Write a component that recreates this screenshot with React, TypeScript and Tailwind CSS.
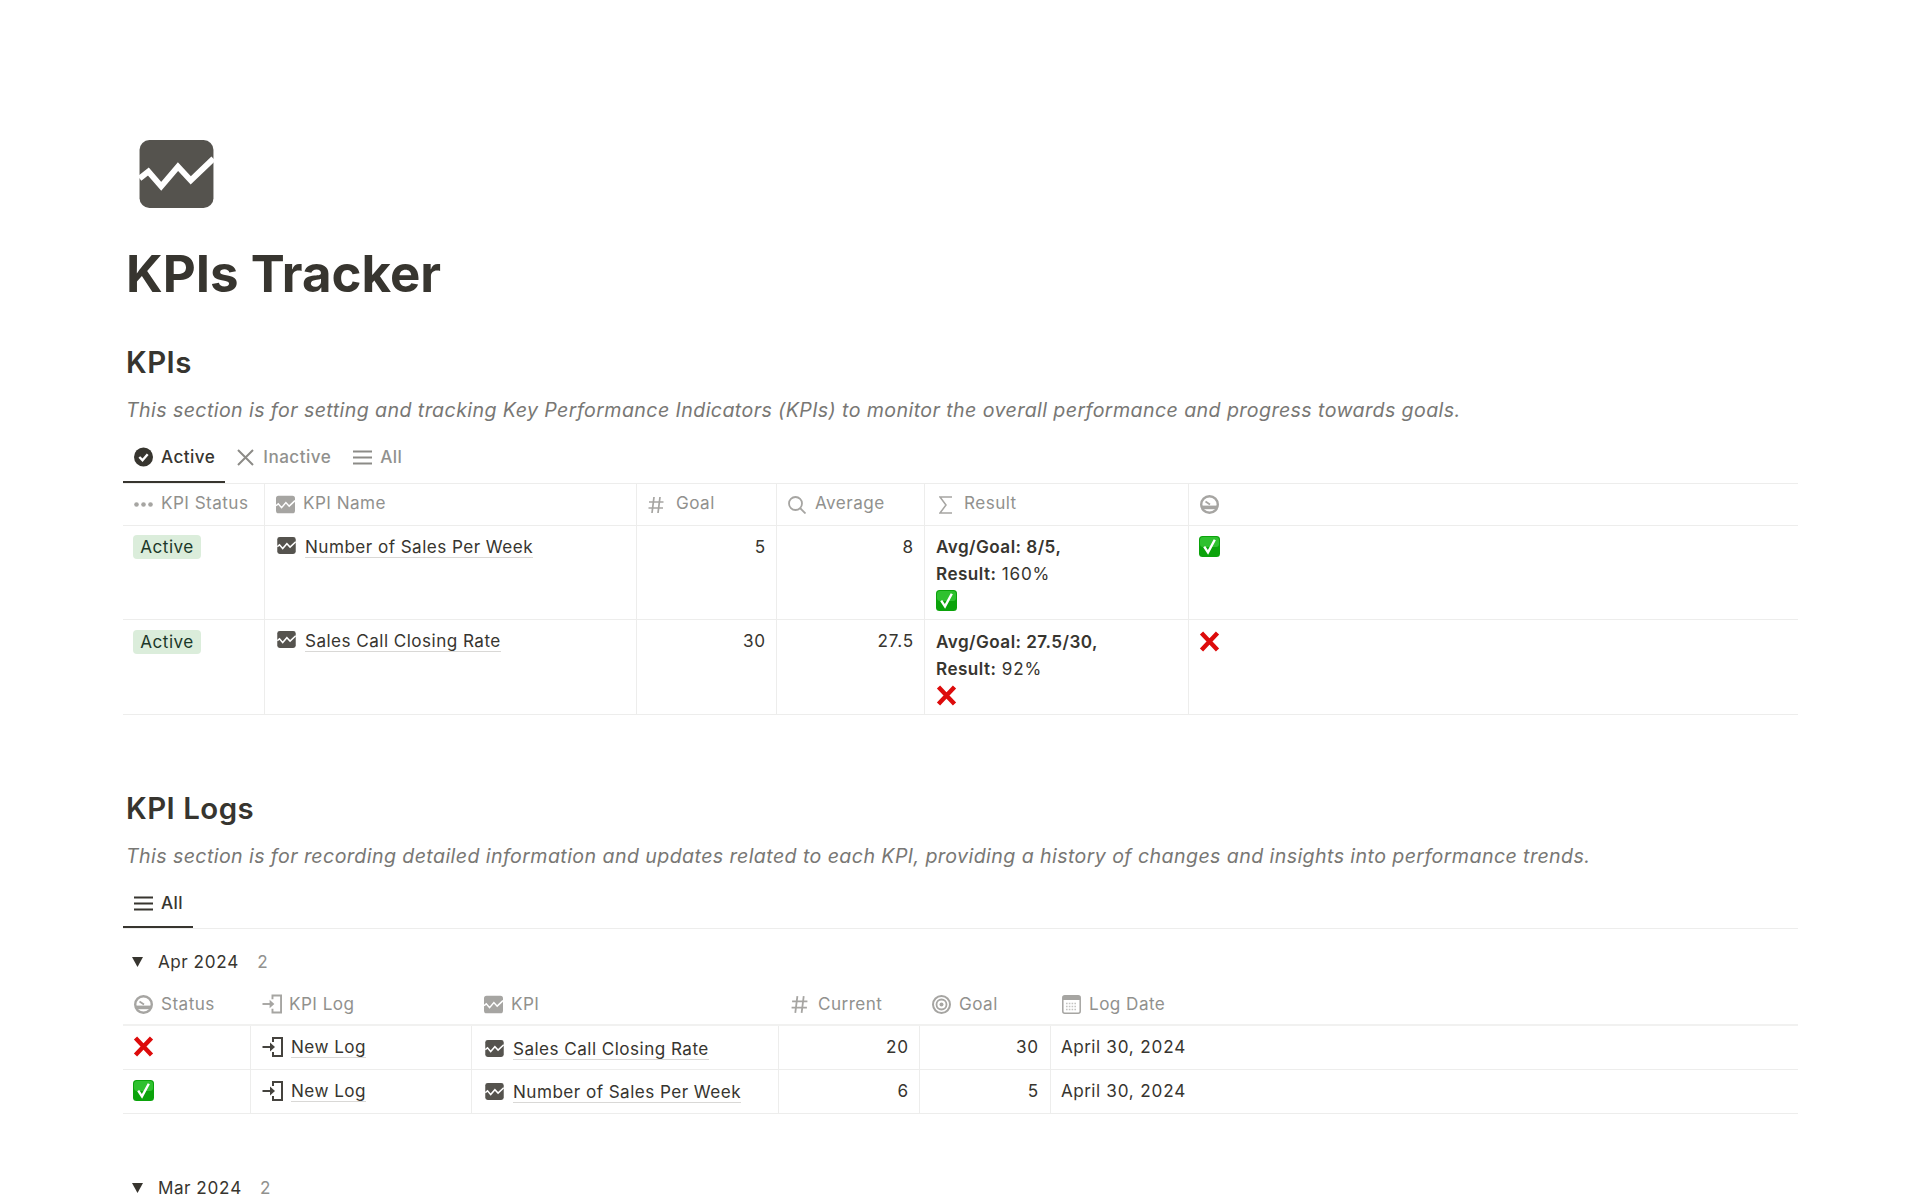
const FONT = "font-['Inter','Noto_Sans',sans-serif]";

function ChartIcon({ className, fill = "#55534e" }: { className: string; fill?: string }) {
  return (
    <svg viewBox="0 0 75 69" className={className}>
      <rect width="75" height="69" rx="10" fill={fill} />
      <path d="M0 39 L9 32 L22 47 L39 27 L52 41 L75 19" fill="none" stroke="#fff" strokeWidth="6" />
    </svg>
  );
}

function CheckEmoji({ className = "h-[21px] w-[21px]" }: { className?: string }) {
  return (
    <svg viewBox="0 0 21 21" className={className}>
      <rect width="21" height="21" rx="3.5" fill="#0ba30b" />
      <rect x="1" y="1" width="19" height="10" rx="3" fill="#2fc12f" />
      <path d="M5.2 10.6 L9 16.4 L15.8 3.8" fill="none" stroke="#fff" strokeWidth="2.4" />
    </svg>
  );
}

function CrossEmoji({ className = "h-[21px] w-[21px]" }: { className?: string }) {
  return (
    <svg viewBox="0 0 21 21" className={className}>
      <path d="M2.5 2 L18.5 19 M18.5 2 L2.5 19" fill="none" stroke="#dd0b0b" strokeWidth="4.4" />
    </svg>
  );
}

function StatusIcon({ className = "h-[19px] w-[19px]" }: { className?: string }) {
  return (
    <svg viewBox="0 0 19 19" className={className} fill="none">
      <circle cx="9.5" cy="9.5" r="8.3" stroke="#a6a5a2" strokeWidth="2.4" />
      <path d="M10 9.5 L5.5 6.5" stroke="#a6a5a2" strokeWidth="1.8" />
      <rect x="2" y="10.6" width="15" height="3.6" fill="#a6a5a2" />
    </svg>
  );
}

function LogIcon({ color, className }: { color: string; className: string }) {
  return (
    <svg viewBox="0 0 21 20" className={className} fill="none" stroke={color} strokeWidth="2">
      <path d="M11 5 V1 H20 V19 H11 V15" />
      <path d="M0.5 10 H11" />
      <path d="M8 5.5 L13 10 L8 14.5 Z" fill={color} stroke="none" />
    </svg>
  );
}

function HashIcon({ className = "h-[18px] w-[16px]" }: { className?: string }) {
  return (
    <svg viewBox="0 0 16 18" className={className} fill="none" stroke="#a6a5a2" strokeWidth="1.7">
      <path d="M6 1 L4 17 M12 1 L10 17 M1 6 H15.5 M0.5 12 H15" />
    </svg>
  );
}

function MenuIcon({ color, className }: { color: string; className: string }) {
  return (
    <svg viewBox="0 0 19 15" className={className} fill="none" stroke={color} strokeWidth="2">
      <path d="M0 1.5 H19 M0 7.5 H19 M0 13.5 H19" />
    </svg>
  );
}

function NameLink({ children }: { children: string }) {
  return <span className="border-b border-[#d9d8d6] leading-[21px]">{children}</span>;
}

function Digits({ children }: { children: string }) {
  return <span className="tracking-[0.85px]">{children}</span>;
}

function ActiveTag() {
  return (
    <span className="flex h-[24px] w-[68px] items-center justify-center rounded-[4px] bg-[#dbeddb] text-[#1c3829]">
      Active
    </span>
  );
}

const kpiHeaders = [
  { icon: <svg viewBox="0 0 19 5" className="mt-[3px] h-[5px] w-[19px]" fill="#a6a5a2"><circle cx="2.5" cy="2.5" r="2.3" /><circle cx="9.5" cy="2.5" r="2.3" /><circle cx="16.5" cy="2.5" r="2.3" /></svg>, label: "KPI Status", gap: "gap-[8px]" },
  { icon: <ChartIcon className="mt-[3px] h-[19px] w-[19px]" fill="#a6a5a2" />, label: "KPI Name", gap: "gap-[8px]" },
  { icon: <HashIcon className="mt-[3px] h-[18px] w-[16px]" />, label: "Goal", gap: "gap-[12px]" },
  { icon: <svg viewBox="0 0 18 18" className="mt-[3px] h-[18px] w-[18px]" fill="none" stroke="#a6a5a2" strokeWidth="1.8"><circle cx="7.5" cy="7.5" r="6.5" /><path d="M12 12 L17.5 17.5" /></svg>, label: "Average", gap: "gap-[9px]" },
  { icon: <svg viewBox="0 0 14 18" className="ml-[3px] mt-[3px] h-[18px] w-[14px]" fill="none" stroke="#a6a5a2" strokeWidth="1.5"><path d="M13 1 H1 L7 9 L1 17 H13" /></svg>, label: "Result", gap: "gap-[11px]" },
  { icon: <StatusIcon className="mt-[3px] h-[19px] w-[19px]" />, label: "", gap: "" },
];

const kpiRows = [
  { name: "Number of Sales Per Week", goal: "5", avg: "8", ratio: "8/5", result: "160%", ok: true },
  { name: "Sales Call Closing Rate", goal: "30", avg: "27.5", ratio: "27.5/30", result: "92%", ok: false },
];

const logHeaders = [
  { icon: <StatusIcon />, label: "Status", gap: "gap-[8px]", pad: "pl-[11px]" },
  { icon: <LogIcon color="#a6a5a2" className="h-[20px] w-[20px]" />, label: "KPI Log", gap: "gap-[7px]", pad: "pl-[11px]" },
  { icon: <ChartIcon className="h-[19px] w-[19px]" fill="#a6a5a2" />, label: "KPI", gap: "gap-[8px]", pad: "pl-[12px]" },
  { icon: <HashIcon className="h-[19px] w-[17px]" />, label: "Current", gap: "gap-[10px]", pad: "pl-[12px]" },
  { icon: <svg viewBox="0 0 19 19" className="h-[19px] w-[19px]" fill="none" stroke="#a6a5a2"><circle cx="9.5" cy="9.5" r="8.5" strokeWidth="2" /><circle cx="9.5" cy="9.5" r="5" strokeWidth="1.8" /><circle cx="9.5" cy="9.5" r="2" fill="#a6a5a2" stroke="none" /></svg>, label: "Goal", gap: "gap-[8px]", pad: "pl-[12px]" },
  { icon: <svg viewBox="0 0 19 19" className="h-[19px] w-[19px]" fill="none"><rect x="0.8" y="0.8" width="17.4" height="17.4" rx="2" stroke="#a6a5a2" strokeWidth="1.5" /><rect x="1" y="1" width="17" height="4" fill="#a6a5a2" /><path d="M4 8.5 H15 M4 11.5 H15 M4 14.5 H15" stroke="#c4c3c1" strokeWidth="1.6" strokeDasharray="1.6 1.2" /></svg>, label: "Log Date", gap: "gap-[8px]", pad: "pl-[11px]" },
];

const logRows = [
  { ok: false, kpi: "Sales Call Closing Rate", current: "20", goal: "30" },
  { ok: true, kpi: "Number of Sales Per Week", current: "6", goal: "5" },
];

function GroupTitle({ month, year }: { month: string; year: string }) {
  return (
    <div className="flex h-[24px] items-center pl-[9px] text-[#37352f]">
      <svg viewBox="0 0 11 10" className="h-[10px] w-[11px]" fill="#37352f"><path d="M0 0 H11 L5.5 10 Z" /></svg>
      <span className="ml-[15px]">{month} <Digits>{year}</Digits></span>
      <span className="ml-[18px] text-[#91918e]">2</span>
    </div>
  );
}

export default function App() {
  return (
    <div className={`${FONT} h-[1199px] overflow-hidden bg-white pl-[123px] pr-[122px] text-[17.14px] tracking-[0.45px] text-[#37352f]`}>
      {/* Page head */}
      <div className="pl-[15px] pt-[140px]">
        <ChartIcon className="h-[68px] w-[77px]" />
      </div>
      <h1 className="mt-[36px] pl-[3px] text-[51px] font-bold leading-[60px] tracking-normal text-[#37352f]">KPIs Tracker</h1>

      {/* KPIs */}
      <h2 className="mt-[40px] pl-[3px] text-[29.4px] font-semibold leading-[38px] tracking-[0.5px]">KPIs</h2>
      <p className="mt-[14px] pl-[3px] text-[19.6px] italic leading-[28px] tracking-[0.41px] text-[#787774]">
        This section is for setting and tracking Key Performance Indicators (KPIs) to monitor the overall performance and progress towards goals.
      </p>

      <div className="mt-[13px] flex h-[47px] items-stretch border-b border-[#ededec] pl-[11px]">
        <div className="relative flex items-center gap-[8px] pb-[6px]">
          <svg viewBox="0 0 19 19" className="h-[20px] w-[19px]" fill="none">
            <circle cx="9.5" cy="9.5" r="9.5" fill="#37352f" />
            <path d="M5.3 9.5 L8.5 12.7 L13.7 6.8" stroke="#fff" strokeWidth="2.4" />
          </svg>
          <span className="font-medium">Active</span>
          <div className="absolute -left-[11px] -right-[10px] bottom-0 h-[2px] bg-[#37352f]" />
        </div>
        <div className="ml-[22px] flex items-center gap-[9px] pb-[6px] text-[#91918e]">
          <svg viewBox="0 0 17 17" className="h-[17px] w-[17px]" fill="none" stroke="#8c8b87" strokeWidth="2"><path d="M1 1 L16 16 M16 1 L1 16" /></svg>
          <span className="font-medium">Inactive</span>
        </div>
        <div className="ml-[22px] flex items-center gap-[8px] pb-[6px] text-[#91918e]">
          <MenuIcon color="#8c8b87" className="h-[15px] w-[19px]" />
          <span className="font-medium">All</span>
        </div>
      </div>

      <div className="grid grid-cols-[142px_372px_140px_148px_264px_1fr] border-b border-[#ededec]">
        {kpiHeaders.map((h, i) => (
          <div key={i} className={`flex h-[42px] items-center border-b border-[#ededec] pb-[3px] pl-[11px] text-[#91918e] ${h.gap} ${i < 5 ? "border-r" : ""}`}>
            {h.icon}
            {h.label && <span>{h.label}</span>}
          </div>
        ))}
        {kpiRows.map((r, i) => (
          <div key={r.name} className="contents">
            <div className={`h-[94px] border-r border-[#ededec] pl-[10px] ${i === 0 ? "border-b pt-[9px]" : "pt-[10px]"}`}>
              <ActiveTag />
            </div>
            <div className={`flex h-[94px] items-start gap-[9px] border-r border-[#ededec] pl-[12px] pt-[10px] ${i === 0 ? "border-b" : ""}`}>
              <ChartIcon className="mt-[1px] h-[17px] w-[19px]" />
              <NameLink>{r.name}</NameLink>
            </div>
            <div className={`h-[94px] border-r border-[#ededec] pr-[10px] pt-[10px] text-right leading-[21px] ${i === 0 ? "border-b" : ""}`}><Digits>{r.goal}</Digits></div>
            <div className={`h-[94px] border-r border-[#ededec] pr-[10px] pt-[10px] text-right leading-[21px] ${i === 0 ? "border-b" : ""}`}><Digits>{r.avg}</Digits></div>
            <div className={`h-[94px] border-r border-[#ededec] pl-[11px] leading-[27px] ${i === 0 ? "border-b pt-[7px]" : "pt-[8px]"}`}>
              <div className="font-semibold">Avg/Goal: {r.ratio},</div>
              <div><span className="font-semibold">Result:</span> <Digits>{r.result}</Digits></div>
              {r.ok ? <CheckEmoji className="mt-[3px] h-[21px] w-[21px]" /> : <CrossEmoji className="mt-[3px] h-[21px] w-[21px]" />}
            </div>
            <div className={`h-[94px] border-[#ededec] pl-[10px] ${i === 0 ? "border-b pt-[10px]" : "pt-[11px]"}`}>
              {r.ok ? <CheckEmoji /> : <CrossEmoji />}
            </div>
          </div>
        ))}
      </div>

      {/* KPI Logs */}
      <h2 className="mt-[75px] pl-[3px] text-[29.4px] font-semibold leading-[38px] tracking-[0.5px]">KPI Logs</h2>
      <p className="mt-[14px] pl-[3px] text-[19.6px] italic leading-[28px] tracking-[0.41px] text-[#787774]">
        This section is for recording detailed information and updates related to each KPI, providing a history of changes and insights into performance trends.
      </p>

      <div className="mt-[13px] flex h-[46px] items-stretch border-b border-[#ededec] pl-[11px]">
        <div className="relative flex items-center gap-[8px] pb-[5px]">
          <MenuIcon color="#37352f" className="h-[15px] w-[19px]" />
          <span className="font-medium">All</span>
          <div className="absolute -left-[11px] -right-[10px] bottom-0 h-[2px] bg-[#37352f]" />
        </div>
      </div>

      <div className="mt-[21px]">
        <GroupTitle month="Apr" year="2024" />
      </div>
      <div className="mt-[10px] grid grid-cols-[128px_221px_307px_141px_131px_1fr] border-b border-[#ededec]">
        {logHeaders.map((h) => (
          <div key={h.label} className={`flex h-[42px] items-center border-b-2 border-[#f1f1f0] text-[#91918e] ${h.gap} ${h.pad}`}>
            {h.icon}
            <span>{h.label}</span>
          </div>
        ))}
        {logRows.map((r, i) => (
          <div key={r.kpi} className="contents">
            <div className={`flex items-center border-r border-[#ededec] pb-[2px] pl-[10px] ${i === 0 ? "h-[44px] border-b" : "h-[43px]"}`}>
              {r.ok ? <CheckEmoji /> : <CrossEmoji />}
            </div>
            <div className={`flex items-center gap-[8px] border-r border-[#ededec] pb-[2px] pl-[11px] ${i === 0 ? "h-[44px] border-b" : "h-[43px]"}`}>
              <LogIcon color="#45433e" className="h-[20px] w-[21px]" />
              <NameLink>New Log</NameLink>
            </div>
            <div className={`flex items-center gap-[9px] border-r border-[#ededec] pl-[13px] ${i === 0 ? "h-[44px] border-b pt-[2px]" : "h-[43px]"}`}>
              <ChartIcon className="h-[17px] w-[19px]" />
              <NameLink>{r.kpi}</NameLink>
            </div>
            <div className={`flex items-center justify-end border-r border-[#ededec] pb-[2px] pr-[10px] ${i === 0 ? "h-[44px] border-b" : "h-[43px]"}`}><Digits>{r.current}</Digits></div>
            <div className={`flex items-center justify-end border-r border-[#ededec] pb-[2px] pr-[11px] ${i === 0 ? "h-[44px] border-b" : "h-[43px]"}`}><Digits>{r.goal}</Digits></div>
            <div className={`flex items-center border-[#ededec] pb-[2px] pl-[10px] ${i === 0 ? "h-[44px] border-b" : "h-[43px]"}`}>April <Digits>&nbsp;30, 2024</Digits></div>
          </div>
        ))}
      </div>

      <div className="mt-[62px]">
        <GroupTitle month="Mar" year="2024" />
      </div>
    </div>
  );
}
